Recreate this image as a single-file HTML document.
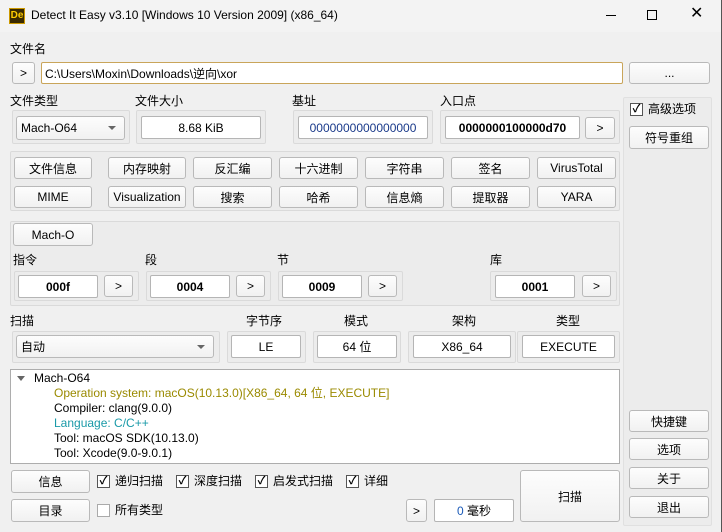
<!DOCTYPE html>
<html><head><meta charset="utf-8"><style>
*{box-sizing:border-box;margin:0;padding:0}
body{width:722px;height:532px;background:#f0f0f0;font-family:"Liberation Sans","Noto Sans CJK SC",sans-serif;font-size:12px;color:#000;position:relative;overflow:hidden}
.a{position:absolute}
.t{position:absolute;white-space:nowrap;line-height:15px}
.b{position:absolute;background:linear-gradient(#fdfdfd,#f1f1f1);border:1px solid #b9b9b9;border-radius:3px;display:flex;align-items:center;justify-content:center;white-space:nowrap}
.i{position:absolute;background:#fff;border:1px solid #b5b5b5;border-radius:2px;display:flex;align-items:center;justify-content:center;white-space:nowrap}
.g{position:absolute;border:1px solid #dadada;border-radius:2px;background:#ececec}
.cb{position:absolute;width:13px;height:13px;border:1px solid #555;background:#fff;font-size:11px;line-height:11px;text-align:center;font-weight:bold}
.cl{position:absolute;white-space:nowrap;line-height:15px}
.arr{position:absolute;right:8px;top:9px;width:0;height:0;border-left:4px solid transparent;border-right:4px solid transparent;border-top:4px solid #666}
</style></head><body>
<div class="a" style="left:0;top:0;width:722px;height:32px;background:#f3f3f3"></div>
<div class="a" style="left:9px;top:8px;width:16px;height:16px;background:#3a2a00;border:1px solid #c90;color:#fc0;font-size:10px;font-weight:bold;line-height:14px;text-align:center">De</div>
<div class="t" style="left:31px;top:8px;font-size:12px">Detect It Easy v3.10 [Windows 10 Version 2009] (x86_64)</div>
<div class="a" style="left:606px;top:15px;width:10px;height:1px;background:#000"></div>
<div class="a" style="left:647px;top:10px;width:10px;height:10px;border:1px solid #000"></div>
<div class="t" style="left:690px;top:6px;font-size:16px">✕</div>
<div class="a" style="left:721px;top:0;width:1px;height:532px;background:#555"></div>

<div class="t" style="left:10px;top:42px">文件名</div>
<div class="b" style="left:12px;top:62px;width:23px;height:22px">&gt;</div>
<div class="i" style="left:41px;top:62px;width:582px;height:22px;justify-content:flex-start;padding-left:3px;border-color:#c9a55a">C:\Users\Moxin\Downloads\逆向\xor</div>
<div class="b" style="left:629px;top:62px;width:81px;height:22px">...</div>

<div class="t" style="left:10px;top:94px">文件类型</div>
<div class="t" style="left:135px;top:94px">文件大小</div>
<div class="t" style="left:292px;top:94px">基址</div>
<div class="t" style="left:440px;top:94px">入口点</div>
<div class="g" style="left:12px;top:110px;width:118px;height:34px"></div>
<div class="b" style="left:16px;top:116px;width:109px;height:24px;justify-content:flex-start;padding-left:4px">Mach-O64<span class="arr"></span></div>
<div class="g" style="left:136px;top:110px;width:130px;height:34px"></div>
<div class="i" style="left:141px;top:116px;width:120px;height:23px">8.68 KiB</div>
<div class="g" style="left:293px;top:110px;width:140px;height:34px"></div>
<div class="i" style="left:298px;top:116px;width:130px;height:23px;color:#1a3a8a">0000000000000000</div>
<div class="g" style="left:440px;top:110px;width:180px;height:34px"></div>
<div class="i" style="left:445px;top:116px;width:135px;height:23px;font-weight:bold">0000000100000d70</div>
<div class="b" style="left:585px;top:117px;width:30px;height:22px">&gt;</div>

<div class="g" style="left:10px;top:151px;width:610px;height:60px"></div>
<div class="b" style="left:14px;top:157px;width:78px;height:22px">文件信息</div>
<div class="b" style="left:108px;top:157px;width:78px;height:22px">内存映射</div>
<div class="b" style="left:193px;top:157px;width:79px;height:22px">反汇编</div>
<div class="b" style="left:279px;top:157px;width:79px;height:22px">十六进制</div>
<div class="b" style="left:365px;top:157px;width:79px;height:22px">字符串</div>
<div class="b" style="left:451px;top:157px;width:79px;height:22px">签名</div>
<div class="b" style="left:537px;top:157px;width:79px;height:22px">VirusTotal</div>
<div class="b" style="left:14px;top:186px;width:78px;height:22px">MIME</div>
<div class="b" style="left:108px;top:186px;width:78px;height:22px">Visualization</div>
<div class="b" style="left:193px;top:186px;width:79px;height:22px">搜索</div>
<div class="b" style="left:279px;top:186px;width:79px;height:22px">哈希</div>
<div class="b" style="left:365px;top:186px;width:79px;height:22px">信息熵</div>
<div class="b" style="left:451px;top:186px;width:79px;height:22px">提取器</div>
<div class="b" style="left:537px;top:186px;width:79px;height:22px">YARA</div>

<div class="g" style="left:10px;top:221px;width:610px;height:85px"></div>
<div class="b" style="left:13px;top:223px;width:80px;height:23px">Mach-O</div>
<div class="t" style="left:13px;top:253px">指令</div>
<div class="t" style="left:145px;top:253px">段</div>
<div class="t" style="left:277px;top:253px">节</div>
<div class="t" style="left:490px;top:253px">库</div>
<div class="g" style="left:14px;top:271px;width:125px;height:30px"></div>
<div class="i" style="left:18px;top:275px;width:80px;height:23px;font-weight:bold">000f</div>
<div class="b" style="left:104px;top:275px;width:29px;height:22px">&gt;</div>
<div class="g" style="left:146px;top:271px;width:125px;height:30px"></div>
<div class="i" style="left:150px;top:275px;width:80px;height:23px;font-weight:bold">0004</div>
<div class="b" style="left:236px;top:275px;width:29px;height:22px">&gt;</div>
<div class="g" style="left:278px;top:271px;width:125px;height:30px"></div>
<div class="i" style="left:282px;top:275px;width:80px;height:23px;font-weight:bold">0009</div>
<div class="b" style="left:368px;top:275px;width:29px;height:22px">&gt;</div>
<div class="g" style="left:490px;top:271px;width:127px;height:30px"></div>
<div class="i" style="left:495px;top:275px;width:80px;height:23px;font-weight:bold">0001</div>
<div class="b" style="left:582px;top:275px;width:29px;height:22px">&gt;</div>

<div class="t" style="left:10px;top:314px">扫描</div>
<div class="t" style="left:246px;top:314px">字节序</div>
<div class="t" style="left:344px;top:314px">模式</div>
<div class="t" style="left:452px;top:314px">架构</div>
<div class="t" style="left:556px;top:314px">类型</div>
<div class="g" style="left:12px;top:331px;width:208px;height:32px"></div>
<div class="b" style="left:16px;top:335px;width:198px;height:23px;justify-content:flex-start;padding-left:4px">自动<span class="arr"></span></div>
<div class="g" style="left:227px;top:331px;width:79px;height:32px"></div>
<div class="i" style="left:231px;top:335px;width:70px;height:23px">LE</div>
<div class="g" style="left:313px;top:331px;width:88px;height:32px"></div>
<div class="i" style="left:317px;top:335px;width:80px;height:23px">64 位</div>
<div class="g" style="left:408px;top:331px;width:108px;height:32px"></div>
<div class="i" style="left:413px;top:335px;width:98px;height:23px">X86_64</div>
<div class="g" style="left:517px;top:331px;width:103px;height:32px"></div>
<div class="i" style="left:522px;top:335px;width:93px;height:23px">EXECUTE</div>

<div class="a" style="left:10px;top:369px;width:610px;height:95px;background:#fff;border:1px solid #adadad"></div>
<div class="a" style="left:17px;top:376px;width:0;height:0;border-left:4px solid transparent;border-right:4px solid transparent;border-top:5px solid #666"></div>
<div class="t" style="left:34px;top:371px">Mach-O64</div>
<div class="t" style="left:54px;top:386px;color:#9a8a00">Operation system: macOS(10.13.0)[X86_64, 64 位, EXECUTE]</div>
<div class="t" style="left:54px;top:401px">Compiler: clang(9.0.0)</div>
<div class="t" style="left:54px;top:416px;color:#1a9aa8">Language: C/C++</div>
<div class="t" style="left:54px;top:431px">Tool: macOS SDK(10.13.0)</div>
<div class="t" style="left:54px;top:446px">Tool: Xcode(9.0-9.0.1)</div>

<div class="b" style="left:11px;top:470px;width:79px;height:23px">信息</div>
<div class="b" style="left:11px;top:499px;width:79px;height:23px">目录</div>
<div class="cb" style="left:97px;top:475px">✓</div><div class="cl" style="left:115px;top:474px">递归扫描</div>
<div class="cb" style="left:176px;top:475px">✓</div><div class="cl" style="left:194px;top:474px">深度扫描</div>
<div class="cb" style="left:255px;top:475px">✓</div><div class="cl" style="left:273px;top:474px">启发式扫描</div>
<div class="cb" style="left:346px;top:475px">✓</div><div class="cl" style="left:364px;top:474px">详细</div>
<div class="cb" style="left:97px;top:504px;border-color:#aaa"></div><div class="cl" style="left:115px;top:503px">所有类型</div>
<div class="b" style="left:406px;top:499px;width:21px;height:23px">&gt;</div>
<div class="i" style="left:434px;top:499px;width:80px;height:23px"><span style="color:#1a5ab8">0</span>&nbsp;毫秒</div>
<div class="b" style="left:520px;top:470px;width:100px;height:52px">扫描</div>

<div class="g" style="left:623px;top:97px;width:89px;height:429px;border-color:#e0e0e0"></div>
<div class="cb" style="left:630px;top:103px">✓</div><div class="cl" style="left:648px;top:102px">高级选项</div>
<div class="b" style="left:629px;top:126px;width:80px;height:23px">符号重组</div>
<div class="b" style="left:629px;top:410px;width:80px;height:22px">快捷键</div>
<div class="b" style="left:629px;top:438px;width:80px;height:22px">选项</div>
<div class="b" style="left:629px;top:467px;width:80px;height:22px">关于</div>
<div class="b" style="left:629px;top:496px;width:80px;height:22px">退出</div>
</body></html>
